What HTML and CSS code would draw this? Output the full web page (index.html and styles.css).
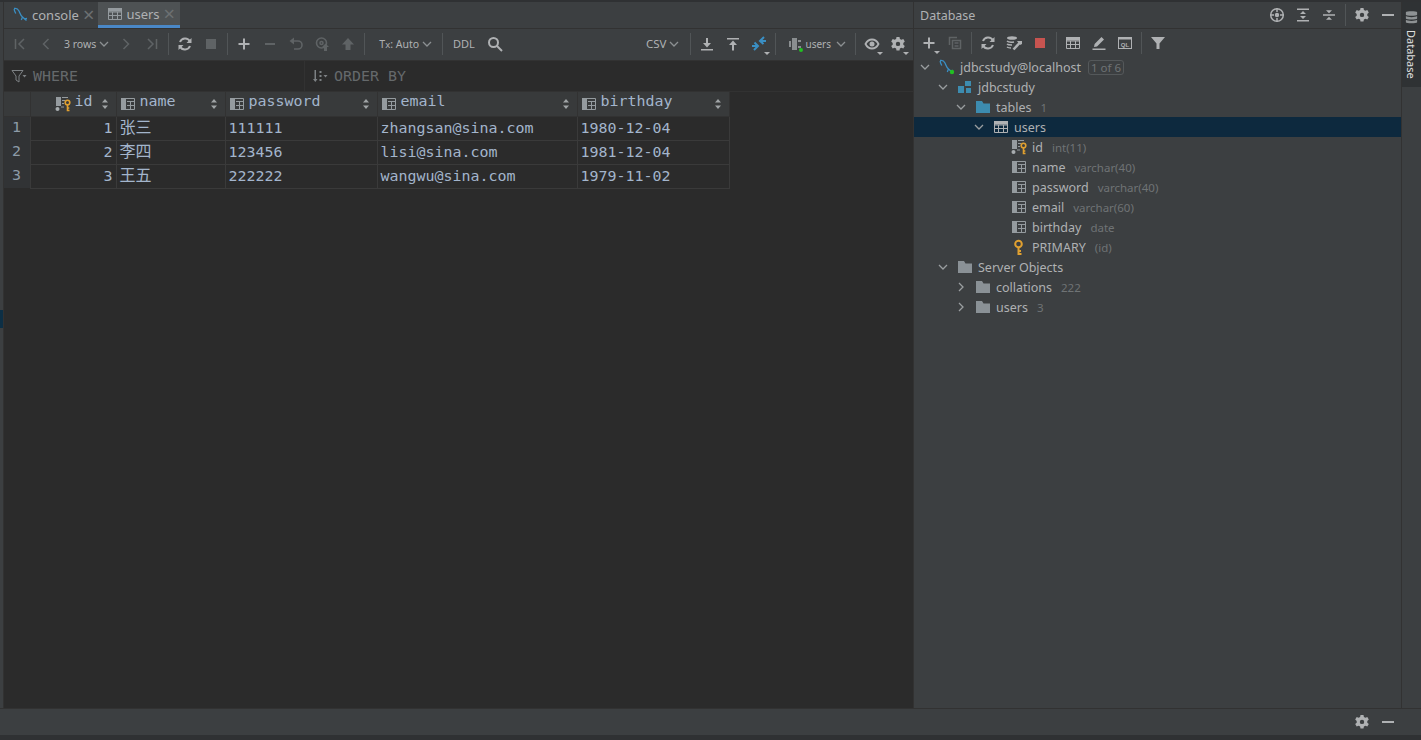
FILE: index.html
```html
<!DOCTYPE html>
<html lang="en">
<head>
    <meta charset="UTF-8">
    <title>users - Database</title>
    <link rel="stylesheet" href="styles.css">
</head>
<body>
<svg class="defs" width="0" height="0">
    <symbol id="i-table" viewBox="0 0 16 16"><path fill="none" stroke="currentColor" d="M1.500 2.500h13v11h-13zM1.500 6h13M1.500 9.500h13M5.500 6v7.500M10.500 6v7.500"/><rect x="1" y="2" width="14" height="3.500" fill="currentColor"/></symbol>
    <symbol id="i-col" viewBox="0 0 16 16"><rect x="1" y="2" width="5" height="12" fill="currentColor"/><path fill="none" stroke="currentColor" d="M6 2.500h8.500v11H6M7 5.500h7.500M7 9.500h7.500M10.500 5.500v8"/></symbol>
    <symbol id="i-colkey" viewBox="0 0 16 16"><rect x="1" y="1" width="5" height="9" fill="currentColor"/><circle cx="2.500" cy="13" r="2" fill="#a8adb0"/><path fill="none" stroke="currentColor" d="M7 1.500h6M7 4.500h3M7 7.500h2M6 11h3"/><g fill="none" stroke="#e0a030" stroke-width="1.600"><circle cx="12.500" cy="6.500" r="2.300"/><path d="M12.500 9v5.500h2M12.500 12h1.800"/></g></symbol>
    <symbol id="i-key" viewBox="0 0 16 16"><g fill="none" stroke="#e0a030" stroke-width="2"><circle cx="7.500" cy="5" r="3.300"/><path d="M7.500 8.500v6.500h3M7.500 12h2.500"/></g></symbol>
    <symbol id="i-folder" viewBox="0 0 16 16"><path fill="currentColor" d="M1 2h6l1.500 2.500H15v9.500H1z"/></symbol>
    <symbol id="i-dolphin" viewBox="0 0 16 16"><g fill="none" stroke="#3a8fc4" stroke-width="1.300"><path d="M1 1.500C3.500 1 5 2 6 4s1.500 4.500 3.500 6l4 3.500"/><path d="M1.200 2c0 2 .8 3.200 1.600 4.500"/><path d="M9.500 10l-1.200 3M11.500 11.800l2.500-.3"/></g></symbol>
    <symbol id="i-chev" viewBox="0 0 10 10"><path fill="none" stroke="currentColor" stroke-width="1.300" d="M1 3l4 4 4-4"/></symbol>
    <symbol id="i-chevr" viewBox="0 0 10 10"><path fill="none" stroke="currentColor" stroke-width="1.300" d="M3 1l4 4-4 4"/></symbol>
    <symbol id="i-sort" viewBox="0 0 6 10"><path fill="currentColor" d="M3 0l3 3.500H0zM3 10L0 6.500h6z"/></symbol>
    <symbol id="i-gear" viewBox="0 0 16 16"><path fill="currentColor" fill-rule="evenodd" d="M6.500 1h3l.4 2 1.500.8 1.900-.8 1.500 2.600-1.500 1.300v1.800l1.500 1.300-1.500 2.600-1.900-.8-1.500.8-.4 2h-3l-.4-2-1.500-.8-1.900.8L1.200 10l1.500-1.300V6.900L1.200 5.600l1.500-2.600 1.900.8 1.500-.8zM8 5.700a2.200 2.200 0 1 0 0 4.400 2.200 2.200 0 0 0 0-4.400z"/></symbol>
    <symbol id="i-refresh" viewBox="0 0 16 16"><g fill="none" stroke="currentColor" stroke-width="2"><path d="M13 5.500A5.500 5.500 0 0 0 3 6M3 10.500A5.500 5.500 0 0 0 13 10"/></g><path fill="currentColor" d="M14.500 2v5h-5zM1.500 14V9h5z"/></symbol>
    <symbol id="i-plus" viewBox="0 0 16 16"><path fill="currentColor" d="M7 2.500h2V7h4.500v2H9v4.500H7V9H2.500V7H7z"/></symbol>
    <symbol id="i-down" viewBox="0 0 16 16"><path fill="currentColor" d="M2 13h12v1.500H2zM7 2h2v5h3l-4 4.500L4 7h3z"/></symbol>
    <symbol id="i-up" viewBox="0 0 16 16"><path fill="currentColor" d="M2 2h12v1.500H2zM8 4.500L12 9H9v5.500H7V9H4z"/></symbol>
</svg>

<div class="window">
    <div class="strip-left"><div class="strip-mark"></div></div>

    <div class="editor">
        <div class="tabs">
            <div class="tab">
                <svg class="ico"><use href="#i-dolphin"/></svg>
                <span>console</span><span class="tab-x">×</span>
            </div>
            <div class="tab active">
                <svg class="ico muted"><use href="#i-table"/></svg>
                <span>users</span><span class="tab-x">×</span>
            </div>
        </div>

        <div class="toolbar">
            <button class="tb off"><svg viewBox="0 0 16 16"><path fill="none" stroke="currentColor" stroke-width="1.500" d="M3.500 3v10M12 3L7 8l5 5"/></svg></button>
            <button class="tb off"><svg viewBox="0 0 16 16"><path fill="none" stroke="currentColor" stroke-width="1.500" d="M10.500 3l-5 5 5 5"/></svg></button>
            <span class="tb-text rows">3 rows</span><svg class="chev"><use href="#i-chev"/></svg>
            <button class="tb off next"><svg viewBox="0 0 16 16"><path fill="none" stroke="currentColor" stroke-width="1.500" d="M5.500 3l5 5-5 5"/></svg></button>
            <button class="tb off"><svg viewBox="0 0 16 16"><path fill="none" stroke="currentColor" stroke-width="1.500" d="M12.500 3v10M4 3l5 5-5 5"/></svg></button>
            <span class="sep"></span>
            <button class="tb"><svg><use href="#i-refresh"/></svg></button>
            <button class="tb off"><svg viewBox="0 0 16 16"><rect x="3" y="3" width="10" height="10" fill="currentColor"/></svg></button>
            <span class="sep"></span>
            <button class="tb"><svg><use href="#i-plus"/></svg></button>
            <button class="tb off"><svg viewBox="0 0 16 16"><rect x="3" y="7" width="10" height="2" fill="currentColor"/></svg></button>
            <button class="tb off"><svg viewBox="0 0 16 16"><path fill="none" stroke="currentColor" stroke-width="1.600" d="M4 5h6a3.500 3.500 0 0 1 0 8H6"/><path fill="currentColor" d="M6 1.500v7L1.500 5z"/></svg></button>
            <button class="tb off"><svg viewBox="0 0 16 16"><g fill="none" stroke="currentColor" stroke-width="1.600"><circle cx="7.500" cy="7" r="5"/><circle cx="7.500" cy="7" r="1.500"/></g><path fill="currentColor" d="M11.500 7.500L15 11h-2v4h-3v-4H8z"/></svg></button>
            <button class="tb off"><svg viewBox="0 0 16 16"><path fill="currentColor" d="M8 2l6 6.500h-3.500V14h-5V8.500H2z"/></svg></button>
            <span class="sep"></span>
            <span class="tb-text tx">T<small>x</small>: Auto</span><svg class="chev"><use href="#i-chev"/></svg>
            <span class="sep sep-tx"></span>
            <span class="tb-text ddl">DDL</span>
            <button class="tb"><svg viewBox="0 0 16 16"><g fill="none" stroke="currentColor" stroke-width="2"><circle cx="6.500" cy="6.500" r="4.500"/><path d="M10 10l5 5"/></g></svg></button>
            <span class="grow"></span>
            <span class="tb-text">CSV</span><svg class="chev"><use href="#i-chev"/></svg>
            <span class="sep sep-csv"></span>
            <button class="tb"><svg><use href="#i-down"/></svg></button>
            <button class="tb"><svg><use href="#i-up"/></svg></button>
            <button class="tb drop"><svg viewBox="0 0 16 16"><g fill="none" stroke="#3a8fc4" stroke-width="2"><path d="M15 5H9.500M13 1L9 5l3.500 3"/><path d="M1 10h5.500M3.500 6.500L7 10l-4 4"/></g></svg></button>
            <span class="sep"></span>
            <svg class="conn" viewBox="-2 0 18 18"><path fill="currentColor" d="M1 6h2v6H1zM4 3h5v12H4zM10 5h3v2h-3zM10 11h3v2h-3z"/><circle cx="13" cy="15" r="2" fill="#22c022"/></svg>
            <span class="tb-text schema">users</span><svg class="chev"><use href="#i-chev"/></svg>
            <span class="sep sep-schema"></span>
            <button class="tb drop"><svg viewBox="0 0 16 16"><path fill="none" stroke="currentColor" stroke-width="1.800" d="M1.500 8C3 5 5.300 3.500 8 3.500S13 5 14.500 8C13 11 10.700 12.500 8 12.500S3 11 1.500 8z"/><circle cx="8" cy="8" r="2.500" fill="currentColor"/></svg></button>
            <button class="tb drop"><svg><use href="#i-gear"/></svg></button>
        </div>

        <div class="filters">
            <div class="filter where">
                <svg class="fico" viewBox="0 0 16 16"><path fill="none" stroke="currentColor" d="M1.500 2.500h11L8.500 8v6l-3-2V8z"/><path fill="currentColor" d="M12 7h4l-2 2.500z"/></svg>
                <span>WHERE</span>
            </div>
            <div class="filter">
                <svg class="fico" viewBox="0 0 16 16"><path fill="currentColor" d="M3 2h1.500v9H6l-2.200 3L1.500 11H3zM8 3h2v2H8zM8 7h2v2H8zM8 11h2v2H8zM12 7h4l-2 2.500z"/></svg>
                <span>ORDER BY</span>
            </div>
        </div>

        <table class="grid">
            <thead>
                <tr>
                    <th class="c-num"></th>
                    <th class="c-id"><div class="th-in th-right"><svg class="col-ico"><use href="#i-colkey"/></svg><span>id</span><svg class="sort"><use href="#i-sort"/></svg></div></th>
                    <th class="c-name"><div class="th-in"><svg class="col-ico"><use href="#i-col"/></svg><span>name</span><svg class="sort"><use href="#i-sort"/></svg></div></th>
                    <th class="c-pass"><div class="th-in"><svg class="col-ico"><use href="#i-col"/></svg><span>password</span><svg class="sort"><use href="#i-sort"/></svg></div></th>
                    <th class="c-mail"><div class="th-in"><svg class="col-ico"><use href="#i-col"/></svg><span>email</span><svg class="sort"><use href="#i-sort"/></svg></div></th>
                    <th class="c-birth"><div class="th-in"><svg class="col-ico"><use href="#i-col"/></svg><span>birthday</span><svg class="sort"><use href="#i-sort"/></svg></div></th>
                </tr>
            </thead>
            <tbody>
                <tr><td class="num">1</td><td class="r">1</td><td class="cjk">张三</td><td>111111</td><td>zhangsan@sina.com</td><td>1980-12-04</td></tr>
                <tr><td class="num">2</td><td class="r">2</td><td class="cjk">李四</td><td>123456</td><td>lisi@sina.com</td><td>1981-12-04</td></tr>
                <tr><td class="num">3</td><td class="r">3</td><td class="cjk">王五</td><td>222222</td><td>wangwu@sina.com</td><td>1979-11-02</td></tr>
            </tbody>
        </table>
    </div>

    <div class="side">
        <div class="side-head">
            <span class="side-title">Database</span>
            <span class="grow"></span>
            <button class="tb"><svg viewBox="0 0 16 16"><circle cx="8" cy="8" r="6.300" fill="none" stroke="currentColor" stroke-width="1.500"/><circle cx="8" cy="8" r="2.200" fill="currentColor"/><path stroke="currentColor" stroke-width="1.500" d="M8 1v4M8 11v4M1 8h4M11 8h4"/></svg></button>
            <button class="tb"><svg viewBox="0 0 16 16"><path fill="currentColor" d="M2 1.500h12V3H2zM2 13h12v1.500H2zM8 4l3 3H5zM8 12l3-3H5z"/></svg></button>
            <button class="tb"><svg viewBox="0 0 16 16"><path fill="currentColor" d="M2 7.300h12v1.400H2zM8 6.300l-3-3h6zM8 9.700l3 3H5z"/></svg></button>
            <span class="sep"></span>
            <button class="tb"><svg><use href="#i-gear"/></svg></button>
            <button class="tb"><svg viewBox="0 0 16 16"><rect x="2" y="7" width="12" height="2" fill="currentColor"/></svg></button>
        </div>

        <div class="side-tools">
            <button class="tb drop"><svg><use href="#i-plus"/></svg></button>
            <button class="tb off"><svg viewBox="0 0 16 16"><path fill="none" stroke="currentColor" stroke-width="1.500" d="M2.500 10V2.500H10M5.500 5.500h8v8h-8zM7.500 8h4M7.500 11h4"/></svg></button>
            <span class="sep"></span>
            <button class="tb"><svg><use href="#i-refresh"/></svg></button>
            <button class="tb"><svg viewBox="0 0 16 16"><ellipse cx="6" cy="3" rx="5" ry="1.800" fill="currentColor"/><path fill="none" stroke="currentColor" stroke-width="1.500" d="M1 6c1 1 4 1.500 7 1M1 9c1 1 3 1 5 1M1 12c1 .7 2 1 4 1"/><path stroke="currentColor" stroke-width="2.500" d="M7.500 14.500l6-6.500"/><path fill="currentColor" d="M11 6h5v3l-2 1z"/></svg></button>
            <button class="tb stop"><svg viewBox="0 0 16 16"><rect x="3" y="3" width="10" height="10" fill="currentColor"/></svg></button>
            <span class="sep"></span>
            <button class="tb"><svg><use href="#i-table"/></svg></button>
            <button class="tb"><svg viewBox="0 0 16 16"><path fill="currentColor" d="M1.500 13.500h13V15h-13zM3 12l.6-3L10.500 2l2.500 2.500-7 7z"/></svg></button>
            <button class="tb"><svg viewBox="0 0 16 16"><rect x="1.500" y="2.500" width="13" height="11" fill="none" stroke="currentColor"/><rect x="1.500" y="2.500" width="13" height="2" fill="currentColor"/><text x="8" y="11.500" text-anchor="middle" class="ql">QL</text></svg></button>
            <span class="sep"></span>
            <button class="tb"><svg viewBox="0 0 16 16"><path fill="currentColor" d="M1 2h14L9.500 8.500V14h-3V8.500z"/></svg></button>
        </div>

        <ul class="tree">
            <li class="node lvl0">
                <svg class="arrow"><use href="#i-chev"/></svg>
                <svg class="ico node-ico" viewBox="0 0 16 16"><use href="#i-dolphin"/><circle cx="13" cy="13" r="2.200" fill="#22c022"/></svg>
                <span>jdbcstudy@localhost</span><span class="badge">1 of 6</span>
            </li>
            <li class="node lvl1">
                <svg class="arrow"><use href="#i-chev"/></svg>
                <svg class="ico node-ico blue" viewBox="0 0 16 16"><path fill="currentColor" d="M1 7h6v7H1zM8 2h6v5H8zM9 9h5v5H9z"/></svg>
                <span>jdbcstudy</span>
            </li>
            <li class="node lvl2">
                <svg class="arrow"><use href="#i-chev"/></svg>
                <svg class="ico node-ico blue"><use href="#i-folder"/></svg>
                <span>tables</span><span class="hint">1</span>
            </li>
            <li class="node lvl3 selected">
                <svg class="arrow"><use href="#i-chev"/></svg>
                <svg class="ico node-ico"><use href="#i-table"/></svg>
                <span>users</span>
            </li>
            <li class="node lvl4"><span class="arrow"></span><svg class="ico node-ico muted"><use href="#i-colkey"/></svg><span>id</span><span class="hint">int(11)</span></li>
            <li class="node lvl4"><span class="arrow"></span><svg class="ico node-ico muted"><use href="#i-col"/></svg><span>name</span><span class="hint">varchar(40)</span></li>
            <li class="node lvl4"><span class="arrow"></span><svg class="ico node-ico muted"><use href="#i-col"/></svg><span>password</span><span class="hint">varchar(40)</span></li>
            <li class="node lvl4"><span class="arrow"></span><svg class="ico node-ico muted"><use href="#i-col"/></svg><span>email</span><span class="hint">varchar(60)</span></li>
            <li class="node lvl4"><span class="arrow"></span><svg class="ico node-ico muted"><use href="#i-col"/></svg><span>birthday</span><span class="hint">date</span></li>
            <li class="node lvl4"><span class="arrow"></span><svg class="ico node-ico"><use href="#i-key"/></svg><span>PRIMARY</span><span class="hint">(id)</span></li>
            <li class="node lvl1">
                <svg class="arrow"><use href="#i-chev"/></svg>
                <svg class="ico node-ico grey"><use href="#i-folder"/></svg>
                <span>Server Objects</span>
            </li>
            <li class="node lvl2">
                <svg class="arrow"><use href="#i-chevr"/></svg>
                <svg class="ico node-ico grey"><use href="#i-folder"/></svg>
                <span>collations</span><span class="hint">222</span>
            </li>
            <li class="node lvl2">
                <svg class="arrow"><use href="#i-chevr"/></svg>
                <svg class="ico node-ico grey"><use href="#i-folder"/></svg>
                <span>users</span><span class="hint">3</span>
            </li>
        </ul>
    </div>

    <div class="strip-right">
        <div class="vtab">
            <svg class="vtab-ico" viewBox="0 0 16 16"><path fill="currentColor" d="M2 2.500C2 1 14 1 14 2.500V5C14 6.500 2 6.500 2 5zM2 6.500c2 1.500 10 1.500 12 0V9c0 1.500-12 1.500-12 0zM2 10.500c2 1.500 10 1.500 12 0V13c0 1.500-12 1.500-12 0z"/></svg>
            <span class="vtab-text">Database</span>
        </div>
    </div>
</div>

<div class="bottom">
    <span class="grow"></span>
    <button class="tb"><svg><use href="#i-gear"/></svg></button>
    <button class="tb"><svg viewBox="0 0 16 16"><rect x="2" y="7" width="12" height="2" fill="currentColor"/></svg></button>
</div>
<div class="status"></div>
</body>
</html>
```

FILE: styles.css
```css
:root {
    --panel: #3c3f41;
    --editor: #2b2b2b;
    --line: #323232;
    --text: #afb1b3;
    --hint: #6f7375;
    --icon: #afb1b3;
    --off: #5f6365;
    --cell: #a3b5cc;
    --accent: #4a88c7;
    --ui: "Noto Sans", "Noto Sans CJK SC", sans-serif;
    --mono: "DejaVu Sans Mono", "Noto Sans CJK SC", monospace;
}

* {
    box-sizing: border-box;
}

html, body {
    height: 100%;
}

body {
    margin: 0;
    display: flex;
    flex-direction: column;
    overflow: hidden;
    background: var(--panel);
    color: var(--text);
    font-family: var(--ui);
    font-size: 12.5px;
}

.defs {
    display: block;
    height: 0;
}

.grow {
    flex: 1;
}

.window {
    flex: 1;
    min-height: 0;
    display: flex;
    border-top: 2px solid #2f3133;
}

/* Side strips */
.strip-left {
    width: 3px;
    flex: none;
    padding-top: 308px;
}

.strip-mark {
    height: 18px;
    background: #0d2f45;
}

.strip-right {
    width: 20px;
    flex: none;
    border-left: 1px solid var(--line);
}

.vtab {
    height: 85px;
    background: #2f3234;
    display: flex;
    flex-direction: column;
    align-items: center;
    padding-top: 8px;
}

.vtab-ico {
    width: 15px;
    height: 15px;
    color: #8e9294;
}

.vtab-text {
    writing-mode: vertical-rl;
    font-size: 11px;
    margin-top: 5px;
    color: #e0e0e0;
}

/* Editor side */
.editor {
    width: 911px;
    flex: none;
    background: var(--editor);
    border-left: 1px solid var(--line);
    border-right: 1px solid var(--line);
    display: flex;
    flex-direction: column;
}

.tabs {
    height: 27px;
    flex: none;
    display: flex;
    background: var(--panel);
    border-bottom: 1px solid var(--line);
}

.tab {
    display: flex;
    align-items: center;
    height: 26px;
    padding: 0 4px 0 9px;
    font-size: 13px;
}

.tab.active {
    background: #4e5254;
    border-bottom: 3px solid var(--accent);
    padding: 0 5px 0 9px;
}

.tab-x {
    color: #6c7072;
    font-size: 20px;
    margin-left: 4px;
    line-height: 1;
}

.ico {
    width: 16px;
    height: 16px;
    margin-right: 3px;
    flex: none;
}

.muted {
    color: #959b9f;
}

/* Toolbars */
.toolbar {
    height: 32px;
    flex: none;
    display: flex;
    align-items: center;
    padding: 0 2px 2px 3px;
    background: var(--panel);
    border-bottom: 1px solid var(--line);
}

.tb {
    width: 26px;
    height: 26px;
    flex: none;
    padding: 5px;
    border: 0;
    background: none;
    color: var(--icon);
    display: flex;
}

.tb svg {
    width: 16px;
    height: 16px;
}

.tb.off {
    color: var(--off);
}

.tb.stop {
    color: #c75450;
}

.tb.next {
    margin-left: 4px;
}

/* small dropdown marker on an icon */
.tb.drop {
    position: relative;
}

.tb.drop::after {
    content: '';
    position: absolute;
    right: 2px;
    bottom: 2px;
    border-left: 3px solid transparent;
    border-right: 3px solid transparent;
    border-top: 3px solid var(--icon);
}

.tb-text {
    font-size: 11.5px;
    color: var(--text);
    white-space: nowrap;
}

.tb-text small {
    font-size: 9.5px;
}

.rows {
    margin-left: 5px;
    font-size: 10.5px;
}

.tx {
    margin-left: 11px;
    font-size: 10.5px;
}

.ddl {
    margin: 0 7px;
    font-size: 11px;
}

.chev {
    width: 10px;
    height: 10px;
    margin-left: 3px;
    color: #8c9092;
    flex: none;
}

.schema + .chev {
    margin-left: 5px;
}

.sep {
    width: 1px;
    height: 22px;
    background: #515557;
    margin: 0 3px;
    flex: none;
}

.sep-tx {
    margin-left: 10px;
}

.sep-csv {
    margin-left: 11px;
}

.sep-schema {
    margin-left: 9px;
}

.conn {
    width: 18px;
    height: 18px;
    margin-left: 7px;
    margin-right: 1px;
    color: #8a8e90;
    flex: none;
}

.schema {
    font-size: 10px;
}

/* Filter row */
.filters {
    height: 31px;
    flex: none;
    display: flex;
    border-bottom: 1px solid var(--line);
    font-family: var(--mono);
    font-size: 14.950px;
    color: #65696b;
}

.filter {
    display: flex;
    align-items: center;
    padding-left: 6px;
}

.where {
    width: 301px;
    border-right: 1px solid var(--line);
}

.fico {
    width: 17px;
    height: 16px;
    margin-right: 6px;
    color: #7d8184;
    flex: none;
}

/* Result grid */
.grid {
    border-collapse: collapse;
    table-layout: fixed;
    width: 725px;
    font-family: var(--mono);
    font-size: 14.950px;
    line-height: 18px;
    color: var(--cell);
}

.grid th {
    height: 24px;
    padding: 0;
    background: #383a3b;
    font-weight: normal;
    text-align: left;
    border-right: 1px solid var(--line);
    border-bottom: 1px solid var(--line);
}

.grid td {
    height: 24px;
    padding: 0 3px;
    border: 1px solid #3a3a3a;
    white-space: nowrap;
    overflow: hidden;
}

.grid td.num {
    background: #313335;
    border: 0;
    color: #8d9ba8;
    padding-left: 8px;
    line-height: 1;
    padding-bottom: 2px;
}

.grid td.r {
    text-align: right;
}

.grid td.cjk {
    font-size: 16px;
}

.c-num {
    width: 26px;
}

.c-id {
    width: 86px;
}

.c-name {
    width: 109px;
}

.c-pass {
    width: 152px;
}

.c-mail {
    width: 200px;
}

.c-birth {
    width: 152px;
}

.th-in {
    display: flex;
    align-items: center;
    height: 23px;
    padding: 0 8px 5px 3px;
}

.th-right {
    padding-left: 24px;
}

.th-in span {
    flex: 1;
    margin-left: 4px;
}

.col-ico {
    width: 16px;
    height: 16px;
    color: #959b9f;
    flex: none;
    margin-top: 5px;
}

.sort {
    width: 6px;
    height: 10px;
    flex: none;
    margin-top: 5px;
    color: #a0a4a6;
}

/* Database panel */
.side {
    flex: 1;
    min-width: 0;
    display: flex;
    flex-direction: column;
    background: var(--panel);
}

.side-head {
    height: 27px;
    flex: none;
    display: flex;
    align-items: center;
    padding: 0 0 0 6px;
    border-bottom: 1px solid var(--line);
}

.side-title {
    font-size: 12.500px;
}

.side-tools {
    height: 28px;
    flex: none;
    display: flex;
    align-items: center;
    padding-left: 2px;
}

.tree {
    list-style: none;
    margin: 0;
    padding: 0;
    font-size: 12.500px;
}

.node {
    height: 20px;
    display: flex;
    align-items: center;
    white-space: nowrap;
}

.node.selected {
    background: #0d293e;
}

.lvl0 { padding-left: 4px; }
.lvl1 { padding-left: 22px; }
.lvl2 { padding-left: 40px; }
.lvl3 { padding-left: 58px; }
.lvl4 { padding-left: 76px; }

.arrow {
    width: 14px;
    height: 10px;
    flex: none;
    color: #9a9ea0;
}

.node-ico {
    margin: 0 5px 0 7px;
}

.blue {
    color: #3d8cb0;
}

.grey {
    color: #8a9196;
}

.hint {
    color: var(--hint);
    font-size: 11.500px;
    margin-left: 9px;
}

.badge {
    margin-left: 7px;
    padding: 0 2px;
    height: 15px;
    line-height: 13px;
    font-size: 11.500px;
    color: var(--hint);
    border: 1px solid #54585a;
    border-radius: 3px;
}

.ql {
    font-family: "Liberation Sans", sans-serif;
    font-size: 6px;
    font-weight: bold;
    fill: currentColor;
}

/* Bottom */
.bottom {
    height: 27px;
    flex: none;
    display: flex;
    align-items: center;
    padding-right: 20px;
    border-top: 1px solid var(--line);
}

.status {
    height: 5px;
    flex: none;
    background: #2f3133;
}
```
